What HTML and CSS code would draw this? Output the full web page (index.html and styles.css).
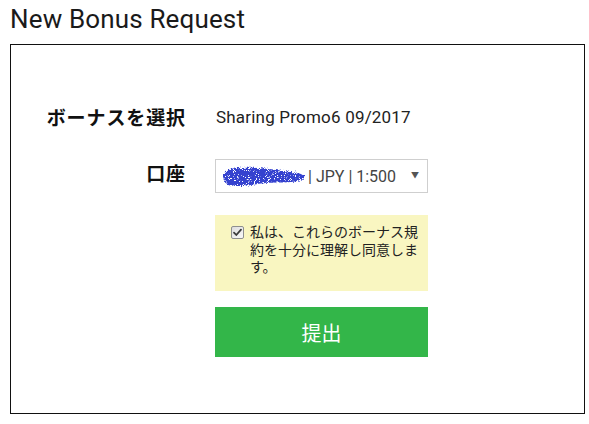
FILE: index.html
```html
<!DOCTYPE html>
<html lang="ja">
<head>
<meta charset="utf-8">
<title>New Bonus Request</title>
<link rel="stylesheet" href="styles.css">
</head>
<body>
<div class="page">
  <h1 class="title">New Bonus Request</h1>
  <div class="panel">
    <div class="form">
      <div class="label label-center">ボーナスを選択</div>
      <div class="value value-text">Sharing Promo6 09/2017</div>

      <div class="label label-top">口座</div>
      <div class="select">
        <svg class="blob" width="86" height="26" viewBox="0 0 86 26">
          <defs>
            <filter id="speck" x="-10%" y="-25%" width="120%" height="150%">
              <feTurbulence type="fractalNoise" baseFrequency="1.1" numOctaves="2" seed="7" result="n"/>
              <feDisplacementMap in="SourceGraphic" in2="n" scale="5" xChannelSelector="R" yChannelSelector="G" result="d"/>
              <feColorMatrix in="n" type="matrix" values="0 0 0 0 0  0 0 0 0 0  0 0 0 0 0  0 0 0 14 -8.6" result="m"/>
              <feComposite in="d" in2="m" operator="out"/>
            </filter>
          </defs>
          <g filter="url(#speck)">
            <path fill="#3442cf" d="M3 10 C5 5 14 3 22 4 C34 3 50 5 62 7 C72 8 80 9 83 12 C85 15 80 17 70 18 C58 19 46 18 36 20 C26 22 14 23 8 21 C3 19 1 14 3 10 Z"/>
          </g>
        </svg>
        <span class="select-text">| JPY | 1:500</span>
        <span class="arrow">▼</span>
      </div>

      <div class="spacer"></div>
      <div class="agree">
        <svg class="check" width="13" height="13" viewBox="0 0 13 13">
          <defs>
            <linearGradient id="cbg" x1="0" y1="0" x2="1" y2="1">
              <stop offset="0" stop-color="#dcdcdc"/>
              <stop offset="1" stop-color="#fafafa"/>
            </linearGradient>
          </defs>
          <rect x="0.5" y="0.5" width="12" height="12" rx="1.5" fill="url(#cbg)" stroke="#8e8f8f"/>
          <path d="M3 6.6 L5.3 9 L10 3.6" fill="none" stroke="#3c3c3c" stroke-width="1.8" stroke-linecap="round" stroke-linejoin="round"/>
        </svg>
        <p class="agree-text">私は、これらのボーナス規約を十分に理解し同意します。</p>
      </div>

      <div class="spacer"></div>
      <button class="submit" type="button">提出</button>
    </div>
  </div>
</div>
</body>
</html>
```
FILE: styles.css
```css
* { box-sizing: border-box; }

html, body {
  margin: 0;
  padding: 0;
  background: #ffffff;
}

.page {
  padding: 0 4px 0 10px;
  font-family: Roboto, "Noto Sans CJK JP", sans-serif;
  color: #222222;
}

.title {
  margin: 0;
  height: 44px;
  padding-top: 3px;
  font-size: 26px;
  line-height: 32px;
  font-weight: 400;
  letter-spacing: 0.15px;
  color: #1a1a1a;
}

.panel {
  width: 575px;
  height: 370px;
  border: 1px solid #111111;
  padding-top: 55px;
}

.form {
  display: grid;
  grid-template-columns: 174px 213px;
  column-gap: 30px;
  row-gap: 0;
}

.label {
  text-align: right;
  font-family: "Noto Sans CJK JP", sans-serif;
  font-weight: 700;
  font-size: 19px;
  letter-spacing: 0.9px;
  margin-right: -1px;
  color: #111111;
}

.label-center {
  line-height: 34px;
  height: 34px;
  margin-bottom: 25px;
}

.label-top {
  line-height: 28px;
}

.value-text {
  font-size: 17px;
  letter-spacing: 0.2px;
  line-height: 34px;
  height: 34px;
  padding-left: 1px;
  color: #222222;
}

.select {
  height: 34px;
  border: 1px solid #cfcfcf;
  background: #ffffff;
  display: flex;
  align-items: center;
  padding-left: 5px;
  padding-right: 8px;
  margin-bottom: 22px;
}

.blob {
  display: block;
  flex: none;
  margin-top: 1px;
}

.select-text {
  font-size: 16px;
  color: #444444;
  margin-left: 1px;
  flex: 1;
}

.arrow {
  font-size: 8px;
  color: #555555;
  line-height: 1;
}

.agree {
  background: #f9f6c1;
  height: 76px;
  display: flex;
  align-items: flex-start;
  padding: 8px 6px 0 16px;
  margin-bottom: 16px;
}

.check {
  flex: none;
  margin-top: 3px;
  margin-right: 6px;
  display: block;
}

.agree-text {
  margin: 0;
  font-family: "Noto Sans CJK JP", sans-serif;
  font-size: 14px;
  line-height: 17.5px;
  width: 172px;
  color: #222222;
}

.submit {
  height: 50px;
  border: 0;
  background: #33b649;
  color: #ffffff;
  font-family: "Noto Sans CJK JP", sans-serif;
  font-size: 20px;
  padding: 0;
  width: 213px;
}
```
